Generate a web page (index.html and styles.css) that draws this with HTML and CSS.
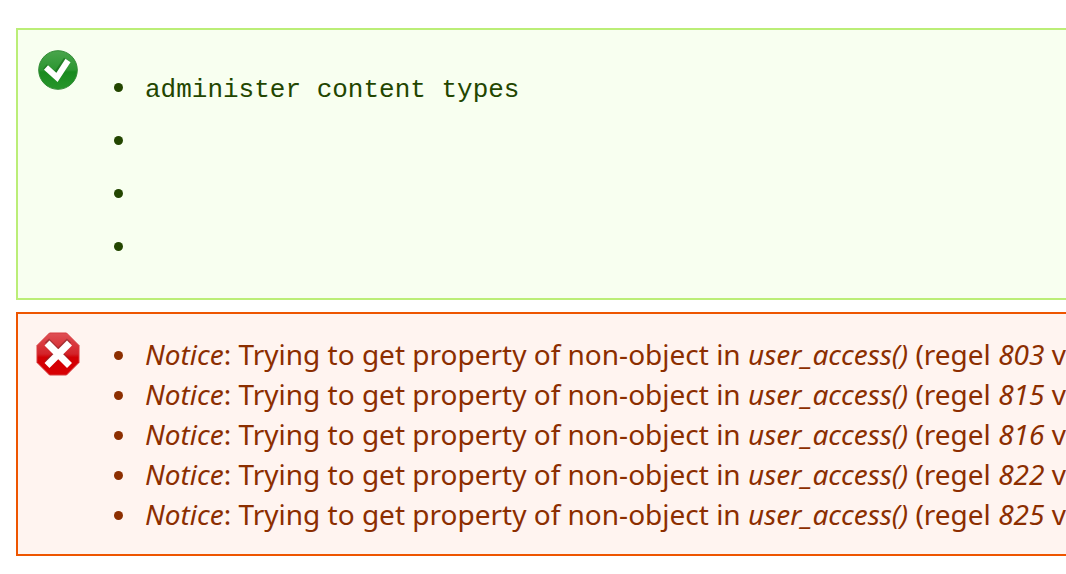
FILE: index.html
```
<!DOCTYPE html>
<html lang="nl">
<head>
    <meta charset="UTF-8">
    <meta name="viewport" content="width=device-width, initial-scale=1.0">
    <title>Messages</title>
    <link rel="stylesheet" href="styles.css">
</head>
<body>
    <div class="messages status">
        <svg class="icon" viewBox="0 0 44 44" aria-hidden="true">
            <defs>
                <linearGradient id="green" x1="0" y1="0" x2="0" y2="1">
                    <stop offset="0" stop-color="#49a54c"/>
                    <stop offset="0.5" stop-color="#2c9631"/>
                    <stop offset="0.55" stop-color="#198a1f"/>
                    <stop offset="1" stop-color="#27962b"/>
                </linearGradient>
            </defs>
            <circle cx="22" cy="20" r="19.3" fill="url(#green)" stroke="#348c37" stroke-width="1"/>
            <path d="M9 16.500l10.500 9L30.500 9.500" fill="none" stroke="#176b1b" stroke-width="6" opacity="0.6"/>
            <path d="M10 17.500l11 10L32 10.500" fill="none" stroke="#fff" stroke-width="6"/>
        </svg>
        <ul>
            <li><code>administer content types</code></li>
            <li></li>
            <li></li>
            <li></li>
        </ul>
    </div>

    <div class="messages error">
        <svg class="icon" viewBox="0 0 44 44" aria-hidden="true">
            <defs>
                <linearGradient id="red" x1="0" y1="0" x2="0" y2="1">
                    <stop offset="0" stop-color="#df5055"/>
                    <stop offset="0.5" stop-color="#d32329"/>
                    <stop offset="0.58" stop-color="#d10004"/>
                    <stop offset="1" stop-color="#d90003"/>
                </linearGradient>
            </defs>
            <path d="M13.500 1h17L43 13.500v17L30.500 43h-17L1 30.500v-17z" fill="url(#red)" stroke="#d63b3f" stroke-width="1"/>
            <path d="M11 8.500l20 20M33 8.500l-22 22" stroke="#85292c" stroke-width="6" opacity="0.6"/>
            <path d="M11 11l22.500 22.500M33.500 11l-22.500 22.500" stroke="#fff" stroke-width="7"/>
        </svg>
        <ul>
            <li><em>Notice</em>: Trying to get property of non-object in <em>user_access()</em> (regel <em>803</em> v</li>
            <li><em>Notice</em>: Trying to get property of non-object in <em>user_access()</em> (regel <em>815</em> v</li>
            <li><em>Notice</em>: Trying to get property of non-object in <em>user_access()</em> (regel <em>816</em> v</li>
            <li><em>Notice</em>: Trying to get property of non-object in <em>user_access()</em> (regel <em>822</em> v</li>
            <li><em>Notice</em>: Trying to get property of non-object in <em>user_access()</em> (regel <em>825</em> v</li>
        </ul>
    </div>
</body>
</html>
```
FILE: styles.css
```
body {
    margin: 28px 0 18px 16px;
    background: #fff;
    font-family: "Lucida Grande", "Noto Sans", sans-serif;
    font-size: 28px;
    line-height: 40px;
}
.messages {
    display: flex;
    margin-bottom: 12px;
    padding: 18px 0 20px 18px;
    border: 2px solid;
    border-right: none;
    overflow: hidden;
    white-space: nowrap;
}
.status {
    color: #234600;
    background: #f8fff0;
    border-color: #bbee77;
}
.status .icon {
    margin-top: 2px;
}
.error {
    color: #8c2e00;
    background: #fff4f0;
    border-color: #ee5500;
}
.icon {
    flex: none;
    width: 44px;
    height: 44px;
}
ul {
    margin: 2px 0 0;
    padding: 0 0 0 59px;
}
li {
    padding-left: 6px;
}
li::marker {
    font-size: 25px;
}
.status ul {
    margin-top: 18px;
}
.status li {
    height: 40px;
    margin-bottom: 13px;
}
code {
    font-family: "Liberation Mono", monospace;
    font-size: 26px;
}
```
